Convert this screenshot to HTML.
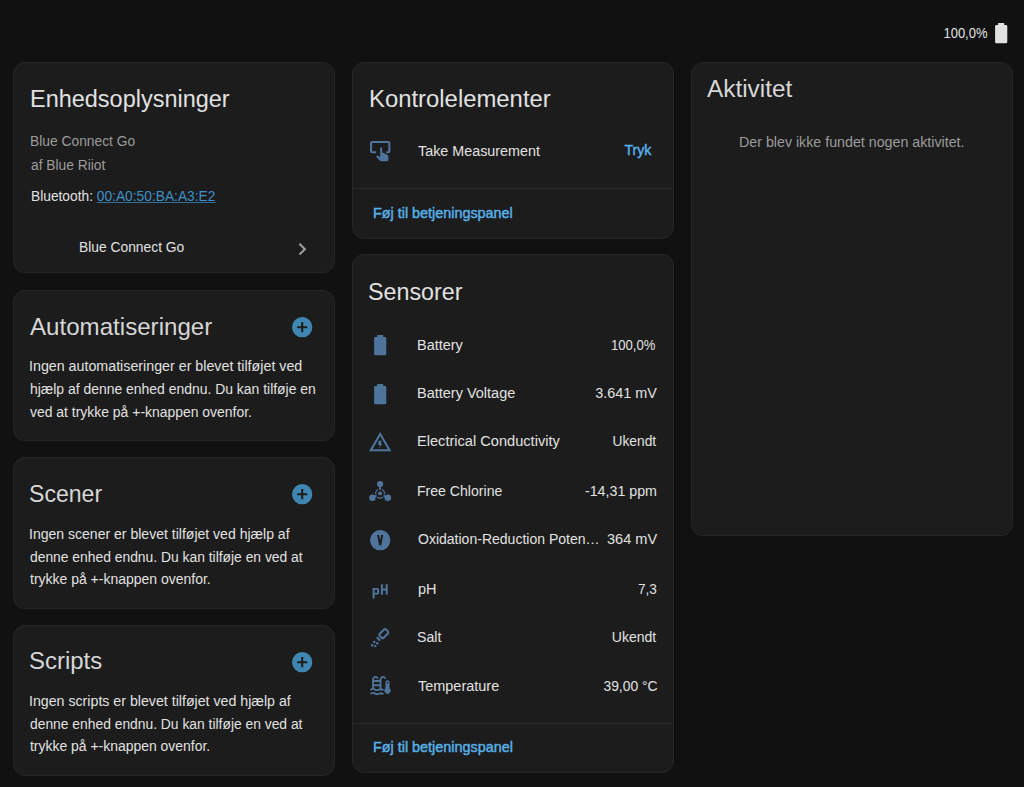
<!DOCTYPE html>
<html><head><meta charset="utf-8"><title>Blue Connect Go</title>
<style>
html,body{margin:0;padding:0;background:#111111;width:1024px;height:787px;overflow:hidden}
body{position:relative;font-family:"Liberation Sans",sans-serif;}
.t{position:absolute;white-space:nowrap}
.card{position:absolute;background:#1c1c1c;border:1px solid #262626;border-radius:12px}
.ic{position:absolute}
.dv{position:absolute;height:1px;background:#2a2a2a}
</style></head><body>
<div class="card" style="left:13px;top:62px;width:320px;height:209px"></div>
<div class="card" style="left:13px;top:290px;width:320px;height:149px"></div>
<div class="card" style="left:13px;top:457px;width:320px;height:150px"></div>
<div class="card" style="left:13px;top:625px;width:320px;height:149px"></div>
<div class="card" style="left:352px;top:62px;width:320px;height:175px"></div>
<div class="card" style="left:352px;top:254px;width:320px;height:517px"></div>
<div class="card" style="left:691px;top:62px;width:320px;height:472px"></div>
<div class="dv" style="left:353px;top:188px;width:320px"></div>
<div class="dv" style="left:353px;top:723px;width:320px"></div>
<svg class="ic" style="left:988.80px;top:20.80px;width:24.4px;height:24.4px;color:#e1e1e1" viewBox="0 0 24 24" fill="currentColor"><path d="M16.67,4H15V2H9V4H7.33A1.33,1.33 0 0,0 6,5.33V20.67C6,21.4 6.6,22 7.33,22H16.67A1.33,1.33 0 0,0 18,20.67V5.33C18,4.6 17.4,4 16.67,4Z"/></svg>
<svg class="ic" style="left:290.00px;top:236.50px;width:24.4px;height:24.4px;color:#9e9e9e" viewBox="0 0 24 24" fill="currentColor"><path d="M8.59,16.58L13.17,12L8.59,7.41L10,6L16,12L10,18L8.59,16.58Z"/></svg>
<svg class="ic" style="left:289.80px;top:315.00px;width:24.4px;height:24.4px;color:#3f87b2" viewBox="0 0 24 24" fill="currentColor"><path d="M12,2A10,10 0 0,1 22,12A10,10 0 0,1 12,22A10,10 0 0,1 2,12A10,10 0 0,1 12,2M13,7H11V11H7V13H11V17H13V13H17V11H13V7Z" fill-rule="evenodd"/></svg>
<svg class="ic" style="left:289.80px;top:482.00px;width:24.4px;height:24.4px;color:#3f87b2" viewBox="0 0 24 24" fill="currentColor"><path d="M12,2A10,10 0 0,1 22,12A10,10 0 0,1 12,22A10,10 0 0,1 2,12A10,10 0 0,1 12,2M13,7H11V11H7V13H11V17H13V13H17V11H13V7Z" fill-rule="evenodd"/></svg>
<svg class="ic" style="left:289.80px;top:650.00px;width:24.4px;height:24.4px;color:#3f87b2" viewBox="0 0 24 24" fill="currentColor"><path d="M12,2A10,10 0 0,1 22,12A10,10 0 0,1 12,22A10,10 0 0,1 2,12A10,10 0 0,1 12,2M13,7H11V11H7V13H11V17H13V13H17V11H13V7Z" fill-rule="evenodd"/></svg>
<svg class="ic" style="left:368.20px;top:139.40px;width:24.4px;height:24.4px;color:#4f749c" viewBox="0 0 24 24" fill="currentColor"><path d="M20 2H4C2.9 2 2 2.9 2 4V12C2 13.1 2.9 14 4 14H8V12H4V4H20V12H18V14H20C21.1 14 22 13.1 22 12V4C22 2.9 21.1 2 20 2Z"/><path d="M12 18V9C12 8.45 12.45 8 13 8S14 8.45 14 9V13.47L15.21 13.6L19.15 15.79C19.68 16.03 20 16.56 20 17.14V20.5C19.97 21.32 19.32 21.97 18.5 22H13C12.62 22 12.26 21.85 12 21.57L8 17.37L8.74 16.6C8.93 16.39 9.2 16.28 9.5 16.28H9.7L12 18Z"/></svg>
<svg class="ic" style="left:368.20px;top:333.10px;width:24.4px;height:24.4px;color:#4f749c" viewBox="0 0 24 24" fill="currentColor"><path d="M16.67,4H15V2H9V4H7.33A1.33,1.33 0 0,0 6,5.33V20.67C6,21.4 6.6,22 7.33,22H16.67A1.33,1.33 0 0,0 18,20.67V5.33C18,4.6 17.4,4 16.67,4Z"/></svg>
<svg class="ic" style="left:368.20px;top:381.90px;width:24.4px;height:24.4px;color:#4f749c" viewBox="0 0 24 24" fill="currentColor"><path d="M16.67,4H15V2H9V4H7.33A1.33,1.33 0 0,0 6,5.33V20.67C6,21.4 6.6,22 7.33,22H16.67A1.33,1.33 0 0,0 18,20.67V5.33C18,4.6 17.4,4 16.67,4Z"/></svg>
<svg class="ic" style="left:368.20px;top:430.00px;width:24.4px;height:24.4px;color:#4f749c" viewBox="0 0 24 24" fill="currentColor"><path d="M12,2L1,21H23L12,2M12,6L19.53,19H4.47L12,6Z" fill-rule="evenodd"/><path d="M10.5,10.7H13.5L12.5,13.2H14L11.3,17.6L11.7,14.7H9.9Z"/></svg>
<svg class="ic" style="left:368.20px;top:479.10px;width:24.4px;height:24.4px;color:#4f749c" viewBox="0 0 24 24" fill="currentColor"><g transform="translate(0.1,0.4)"><circle cx="11.8" cy="14" r="4.43" fill="none" stroke="currentColor" stroke-width="1.35"/><path d="M11.8,7V11M4.23,18.1L8.9,15.6M19.37,18.1L14.7,15.6" stroke="#1c1c1c" stroke-width="3.4"/><path d="M11.8,7V10.3M4.23,18.1L8.4,15.85M19.37,18.1L15.2,15.85" stroke="currentColor" stroke-width="1.8"/><circle cx="11.8" cy="4.62" r="3.05"/><circle cx="4.23" cy="18.1" r="3.2"/><circle cx="19.37" cy="18.1" r="3.2"/><circle cx="11.8" cy="13.8" r="1.9"/></g></svg>
<svg class="ic" style="left:368.20px;top:527.90px;width:24.4px;height:24.4px;color:#4f749c" viewBox="0 0 24 24" fill="currentColor"><path d="M12,2A10,10 0 0,1 22,12A10,10 0 0,1 12,22A10,10 0 0,1 2,12A10,10 0 0,1 12,2M9,7L11,17H13L15,7H13L12,12L11,7H9Z" fill-rule="evenodd"/></svg>
<svg class="ic" style="left:368.20px;top:576.80px;width:24.4px;height:24.4px;color:#4f749c" viewBox="0 0 24 24" fill="currentColor"><path d="M4.5,10.8H9A2,2 0 0,1 11,12.8V15.2A2,2 0 0,1 9,17.2H6.5V21.2H4.5ZM6.5,12.6V15.4H9V12.6Z" fill-rule="evenodd"/><path d="M12.7,7.2H14.7V11.4H17.4V7.2H19.4V17.4H17.4V13.2H14.7V17.4H12.7Z"/></svg>
<svg class="ic" style="left:368.20px;top:625.90px;width:24.4px;height:24.4px;color:#4f749c" viewBox="0 0 24 24" fill="currentColor"><rect x="12.86" y="3.1" width="5.4" height="8.8" rx="1.4" fill="none" stroke="currentColor" stroke-width="2" transform="rotate(45 15.56 7.5)"/><rect x="7.9" y="11.6" width="4.8" height="2.1" rx="0.9" transform="rotate(45 10.3 12.65)"/><circle cx="6.2" cy="15.8" r="1.2"/><circle cx="9.05" cy="16.95" r="1.2"/><circle cx="4.1" cy="18.85" r="1.2"/><circle cx="7.1" cy="19.8" r="1.2"/></svg>
<svg class="ic" style="left:368.20px;top:674.10px;width:24.4px;height:24.4px;color:#4f749c" viewBox="0 0 24 24" fill="currentColor"><g transform="translate(0.2,0.6)"><g fill="none" stroke="currentColor" stroke-width="1.8" stroke-linecap="round"><path d="M4.8,14V5.3C4.8,3.6 5.9,2.3 7.3,2.3C8.2,2.3 8.9,2.7 9.3,3.4"/><path d="M12.1,14.4V5.3C12.1,3.6 13.2,2.3 14.6,2.3C15.5,2.3 16.2,2.7 16.6,3.5"/><path d="M4.8,6.3H12.1M4.8,10.5H12.1"/><path d="M2.8,14.6C4,13.8 5.1,13.8 6.5,14.6S9.1,15.6 10.4,14.9S12.9,14.2 14.4,15"/><path d="M2.8,18.5C4,17.7 5.1,17.7 6.5,18.5S9.1,19.5 10.4,18.8S12.9,18.1 14.4,18.9"/></g><path d="M19,5.6A2,2 0 0,1 21,7.6V13.5A3.05,3.05 0 1,1 17,13.5V7.6A2,2 0 0,1 19,5.6ZM19,7.3A0.8,0.8 0 1,0 19,8.9A0.8,0.8 0 1,0 19,7.3Z" fill-rule="evenodd"/></g></svg>
<div class="t" style="right:37.00px;top:24.57px;font-size:14.3px;line-height:17.88px;color:#e1e1e1;transform:scaleX(0.9084);transform-origin:right;">100,0%</div>
<div class="t" style="left:29.50px;top:84.40px;font-size:24.6px;line-height:30.75px;color:#e1e1e1;transform:scaleX(0.9543);transform-origin:left;">Enhedsoplysninger</div>
<div class="t" style="left:29.50px;top:133.36px;font-size:14.25px;line-height:17.81px;color:#9b9b9b;transform:scaleX(0.9692);transform-origin:left;">Blue Connect Go</div>
<div class="t" style="left:30.50px;top:156.86px;font-size:14.25px;line-height:17.81px;color:#9b9b9b;transform:scaleX(0.9675);transform-origin:left;">af Blue Riiot</div>
<div class="t" style="left:30.50px;top:187.86px;font-size:14.25px;line-height:17.81px;color:#e1e1e1;transform:scaleX(0.9658);transform-origin:left;">Bluetooth: <span style="color:#3d90c8;text-decoration:underline;text-decoration-color:#346f99;text-decoration-thickness:1px;text-underline-offset:0.6px">00:A0:50:BA:A3:E2</span></div>
<div class="t" style="left:78.50px;top:239.36px;font-size:14.25px;line-height:17.81px;color:#e1e1e1;transform:scaleX(0.9701);transform-origin:left;">Blue Connect Go</div>
<div class="t" style="left:30.00px;top:312.06px;font-size:24.6px;line-height:30.75px;color:#d6d6d6;transform:scaleX(0.9803);transform-origin:left;">Automatiseringer</div>
<div class="t" style="left:29.00px;top:358.46px;font-size:14.25px;line-height:17.81px;color:#e1e1e1;">Ingen automatiseringer er blevet tilføjet ved</div>
<div class="t" style="left:30.00px;top:381.12px;font-size:14.25px;line-height:17.81px;color:#e1e1e1;transform:scaleX(0.9777);transform-origin:left;">hjælp af denne enhed endnu. Du kan tilføje en</div>
<div class="t" style="left:30.00px;top:404.46px;font-size:14.25px;line-height:17.81px;color:#e1e1e1;transform:scaleX(0.9779);transform-origin:left;">ved at trykke på +-knappen ovenfor.</div>
<div class="t" style="left:28.50px;top:479.40px;font-size:24.6px;line-height:30.75px;color:#d6d6d6;transform:scaleX(0.9387);transform-origin:left;">Scener</div>
<div class="t" style="left:29.00px;top:525.86px;font-size:14.25px;line-height:17.81px;color:#e1e1e1;transform:scaleX(0.9849);transform-origin:left;">Ingen scener er blevet tilføjet ved hjælp af</div>
<div class="t" style="left:30.00px;top:548.60px;font-size:14.25px;line-height:17.81px;color:#e1e1e1;transform:scaleX(0.9722);transform-origin:left;">denne enhed endnu. Du kan tilføje en ved at</div>
<div class="t" style="left:30.00px;top:571.36px;font-size:14.25px;line-height:17.81px;color:#e1e1e1;transform:scaleX(0.9810);transform-origin:left;">trykke på +-knappen ovenfor.</div>
<div class="t" style="left:28.50px;top:646.30px;font-size:24.6px;line-height:30.75px;color:#d6d6d6;transform:scaleX(0.9730);transform-origin:left;">Scripts</div>
<div class="t" style="left:29.00px;top:692.62px;font-size:14.25px;line-height:17.81px;color:#e1e1e1;transform:scaleX(0.9954);transform-origin:left;">Ingen scripts er blevet tilføjet ved hjælp af</div>
<div class="t" style="left:30.00px;top:715.96px;font-size:14.25px;line-height:17.81px;color:#e1e1e1;transform:scaleX(0.9715);transform-origin:left;">denne enhed endnu. Du kan tilføje en ved at</div>
<div class="t" style="left:30.00px;top:738.36px;font-size:14.25px;line-height:17.81px;color:#e1e1e1;transform:scaleX(0.9783);transform-origin:left;">trykke på +-knappen ovenfor.</div>
<div class="t" style="left:369.00px;top:83.54px;font-size:24.6px;line-height:30.75px;color:#e1e1e1;transform:scaleX(0.9704);transform-origin:left;">Kontrolelementer</div>
<div class="t" style="left:417.80px;top:142.60px;font-size:14.25px;line-height:17.81px;color:#e1e1e1;transform:scaleX(1.0058);transform-origin:left;">Take Measurement</div>
<div class="t" style="right:372.10px;top:141.21px;font-size:14.4px;line-height:18.0px;color:#57b0e6;-webkit-text-stroke:0.45px currentColor;transform:scaleX(0.9821);transform-origin:right;">Tryk</div>
<div class="t" style="left:372.75px;top:203.84px;font-size:14.4px;line-height:18.0px;color:#57b0e6;-webkit-text-stroke:0.45px currentColor;transform:scaleX(0.9982);transform-origin:left;">Føj til betjeningspanel</div>
<div class="t" style="left:367.70px;top:276.90px;font-size:24.6px;line-height:30.75px;color:#e1e1e1;transform:scaleX(0.9475);transform-origin:left;">Sensorer</div>
<div class="t" style="left:416.60px;top:336.60px;font-size:14.25px;line-height:17.81px;color:#e1e1e1;transform:scaleX(1.0134);transform-origin:left;">Battery</div>
<div class="t" style="right:368.20px;top:336.60px;font-size:14.25px;line-height:17.81px;color:#e1e1e1;transform:scaleX(0.9171);transform-origin:right;">100,0%</div>
<div class="t" style="left:416.60px;top:385.12px;font-size:14.25px;line-height:17.81px;color:#e1e1e1;transform:scaleX(1.0167);transform-origin:left;">Battery Voltage</div>
<div class="t" style="right:367.20px;top:385.12px;font-size:14.25px;line-height:17.81px;color:#e1e1e1;transform:scaleX(1.0131);transform-origin:right;">3.641 mV</div>
<div class="t" style="left:416.60px;top:433.36px;font-size:14.25px;line-height:17.81px;color:#e1e1e1;transform:scaleX(1.0245);transform-origin:left;">Electrical Conductivity</div>
<div class="t" style="right:368.00px;top:433.36px;font-size:14.25px;line-height:17.81px;color:#e1e1e1;transform:scaleX(0.9669);transform-origin:right;">Ukendt</div>
<div class="t" style="left:416.50px;top:482.60px;font-size:14.25px;line-height:17.81px;color:#e1e1e1;transform:scaleX(0.9883);transform-origin:left;">Free Chlorine</div>
<div class="t" style="right:367.00px;top:482.60px;font-size:14.25px;line-height:17.81px;color:#e1e1e1;">-14,31 ppm</div>
<div class="t" style="left:417.50px;top:531.12px;font-size:14.25px;line-height:17.81px;color:#e1e1e1;transform:scaleX(0.9836);transform-origin:left;">Oxidation-Reduction Poten…</div>
<div class="t" style="right:367.00px;top:531.12px;font-size:14.25px;line-height:17.81px;color:#e1e1e1;transform:scaleX(1.0205);transform-origin:right;">364 mV</div>
<div class="t" style="left:417.50px;top:580.58px;font-size:14.25px;line-height:17.81px;color:#e1e1e1;transform:scaleX(1.0180);transform-origin:left;">pH</div>
<div class="t" style="right:367.00px;top:580.58px;font-size:14.25px;line-height:17.81px;color:#e1e1e1;transform:scaleX(0.9500);transform-origin:right;">7,3</div>
<div class="t" style="left:417.00px;top:629.12px;font-size:14.25px;line-height:17.81px;color:#e1e1e1;transform:scaleX(0.9923);transform-origin:left;">Salt</div>
<div class="t" style="right:368.00px;top:629.12px;font-size:14.25px;line-height:17.81px;color:#e1e1e1;transform:scaleX(0.9823);transform-origin:right;">Ukendt</div>
<div class="t" style="left:417.80px;top:677.60px;font-size:14.25px;line-height:17.81px;color:#e1e1e1;transform:scaleX(1.0151);transform-origin:left;">Temperature</div>
<div class="t" style="right:366.20px;top:677.60px;font-size:14.25px;line-height:17.81px;color:#e1e1e1;transform:scaleX(0.9746);transform-origin:right;">39,00 °C</div>
<div class="t" style="left:372.75px;top:738.28px;font-size:14.4px;line-height:18.0px;color:#57b0e6;-webkit-text-stroke:0.45px currentColor;transform:scaleX(0.9989);transform-origin:left;">Føj til betjeningspanel</div>
<div class="t" style="left:707.00px;top:73.56px;font-size:24.6px;line-height:30.75px;color:#d6d6d6;transform:scaleX(0.9907);transform-origin:left;">Aktivitet</div>
<div class="t" style="left:738.50px;top:134.36px;font-size:14.25px;line-height:17.81px;color:#9b9b9b;transform:scaleX(0.9987);transform-origin:left;">Der blev ikke fundet nogen aktivitet.</div>
</body></html>
